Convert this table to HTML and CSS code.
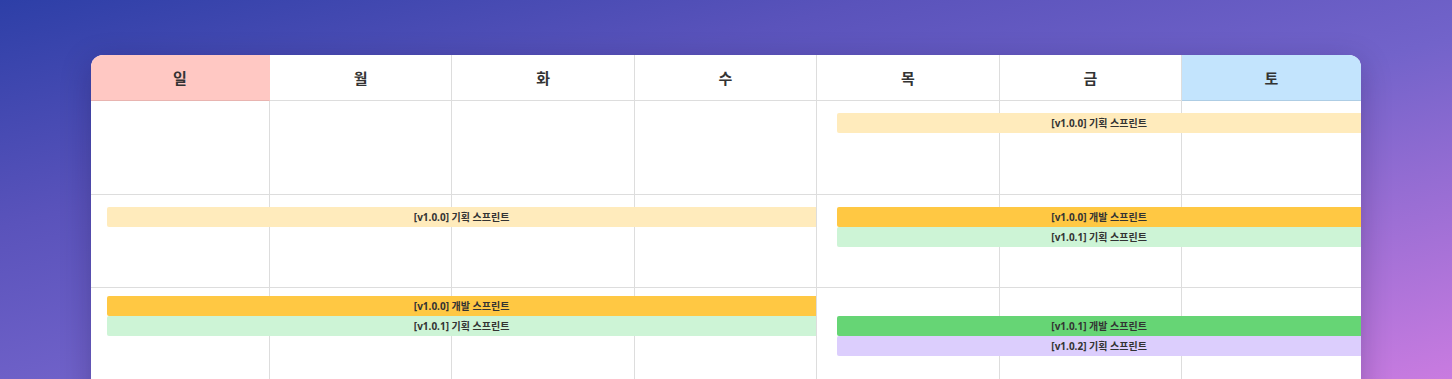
FILE: index.html
```html
<!DOCTYPE html>
<html lang="ko">
<head>
<meta charset="utf-8">
<title>Calendar</title>
<link rel="stylesheet" href="styles.css">
</head>
<body>
<div class="stage">
  <div class="card">
    <div class="head">
      <div class="hd sun">일</div>
      <div class="hd">월</div>
      <div class="hd">화</div>
      <div class="hd">수</div>
      <div class="hd">목</div>
      <div class="hd">금</div>
      <div class="hd sat">토</div>
    </div>

    <div class="week w-a first">
      <div class="cell c1"></div><div class="cell c2"></div><div class="cell c3"></div><div class="cell c4"></div><div class="cell c5"></div><div class="cell c6"></div><div class="cell c7"></div>
      <div class="ev right lane1 plan">[v1.0.0] 기획 스프린트</div>
    </div>

    <div class="week w-a">
      <div class="cell c1"></div><div class="cell c2"></div><div class="cell c3"></div><div class="cell c4"></div><div class="cell c5"></div><div class="cell c6"></div><div class="cell c7"></div>
      <div class="ev left lane1 plan">[v1.0.0] 기획 스프린트</div>
      <div class="ev right lane1 dev">[v1.0.0] 개발 스프린트</div>
      <div class="ev right lane2 plan-g">[v1.0.1] 기획 스프린트</div>
    </div>

    <div class="week w-b">
      <div class="cell c1"></div><div class="cell c2"></div><div class="cell c3"></div><div class="cell c4"></div><div class="cell c5"></div><div class="cell c6"></div><div class="cell c7"></div>
      <div class="ev left lane1 dev">[v1.0.0] 개발 스프린트</div>
      <div class="ev left lane2 plan-g">[v1.0.1] 기획 스프린트</div>
      <div class="ev right lane2 dev-g">[v1.0.1] 개발 스프린트</div>
      <div class="ev right lane3 plan-p">[v1.0.2] 기획 스프린트</div>
    </div>
  </div>
</div>
</body>
</html>
```

FILE: styles.css
```css
html, body {
  margin: 0;
  padding: 0;
}

body {
  width: 1452px;
  height: 379px;
  overflow: hidden;
  font-family: "Noto Sans", "Noto Sans CJK KR", sans-serif;
}

.stage {
  height: 379px;
  padding: 55px 91px 0 91px;
  box-sizing: border-box;
  background: linear-gradient(to bottom right, #2d3fa7 0%, #5a53bb 30%, #7263ca 55%, #c97be0 100%);
}

.card {
  width: 1270px;
  height: 420px;
  background: #ffffff;
  border-radius: 12px 12px 0 0;
  overflow: hidden;
  box-shadow: 0 8px 30px rgba(20, 10, 60, 0.28);
}

.head {
  display: grid;
  grid-template-columns: 179px repeat(5, 1fr) 179px;
  height: 46px;
}

.hd {
  display: flex;
  align-items: center;
  justify-content: center;
  font-family: "Noto Sans CJK KR", sans-serif;
  font-size: 15px;
  font-weight: 700;
  color: #333333;
  border-right: 1px solid #dddddd;
  border-bottom: 1px solid #dddddd;
}

.hd:last-child {
  border-right: none;
}

.hd.sun {
  background: #ffc8c3;
  border-right-color: #ffc8c3;
  border-bottom-color: #e8b4b0;
}

.hd.sat {
  background: #c3e4fd;
  border-bottom-color: #aecde4;
}

.week {
  display: grid;
  grid-template-columns: 179px repeat(5, 1fr) 179px;
  height: 93px;
  box-sizing: border-box;
}

.week.first {
  height: 94px;
}

.w-a {
  grid-template-rows: 12px 20px 20px 20px 1fr;
}

.w-b {
  grid-template-rows: 8px 20px 20px 20px 1fr;
}

.cell {
  grid-row: 1 / -1;
  border-right: 1px solid #dddddd;
  border-bottom: 1px solid #dddddd;
}

.c1 { grid-column: 1; }
.c2 { grid-column: 2; }
.c3 { grid-column: 3; }
.c4 { grid-column: 4; }
.c5 { grid-column: 5; }
.c6 { grid-column: 6; }
.c7 { grid-column: 7; border-right: none; }

.ev {
  position: relative;
  z-index: 1;
  height: 20px;
  line-height: 20px;
  text-align: center;
  font-family: "Noto Sans", "Noto Sans CJK KR", sans-serif;
  font-size: 10px;
  font-weight: 700;
  color: #333333;
  white-space: nowrap;
  border-radius: 2px 0 0 2px;
}

.left {
  grid-column: 1 / 5;
  margin-left: 16px;
  margin-right: 1px;
}

.right {
  grid-column: 5 / 8;
  margin-left: 20px;
}

.lane1 { grid-row: 2; }
.lane2 { grid-row: 3; }
.lane3 { grid-row: 4; }

.plan { background: #ffebbc; }
.dev { background: #ffc843; }
.plan-g { background: #cdf4d6; }
.dev-g { background: #66d575; }
.plan-p { background: #dccefd; }
```
